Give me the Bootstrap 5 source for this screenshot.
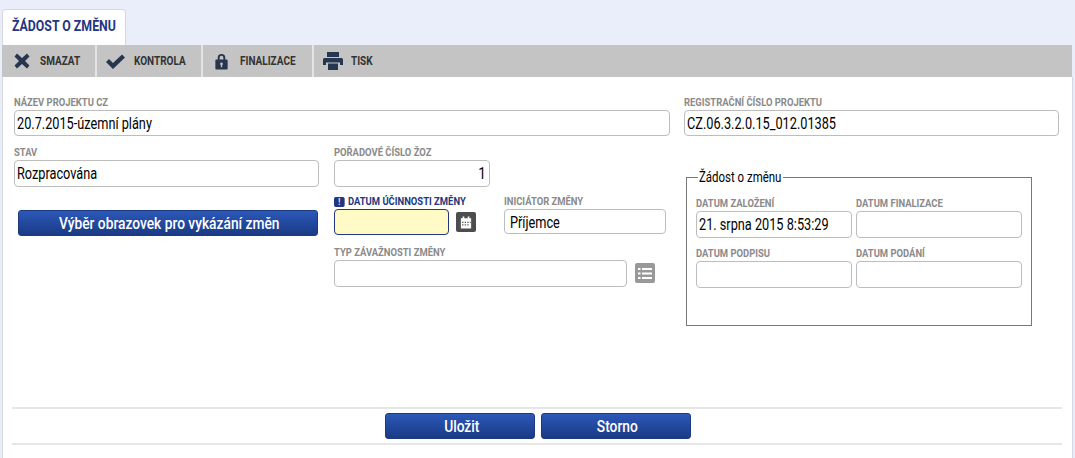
<!DOCTYPE html>
<html lang="cs"><head><meta charset="utf-8"><title>Žádost o změnu</title>
<link href="https://cdn.jsdelivr.net/npm/bootstrap@5.3.0/dist/css/bootstrap.min.css" rel="stylesheet">
<style>
html,body{height:458px;overflow:hidden}
body{background:#eaeefa;font-family:Roboto,"Liberation Sans",sans-serif;padding:9px 3px 0 2px;color:#000}
.tx{display:inline-block;white-space:nowrap;transform-origin:left center}
.tab-head{width:124px;height:36px;background:#fff;border:1px solid #d5d8e0;border-bottom:0;border-radius:4px 4px 0 0;color:#23367f;font-weight:700;font-size:14.5px;line-height:34px;padding-left:9px;white-space:nowrap}
.tab-head .tx{transform:scaleX(.85)}
.tool-bar{height:32px;background:#c4c4c4}
.tool-item{height:32px;display:flex;align-items:center;font-weight:700;font-size:12.5px;color:#333;border-right:2px solid #e4e4e4}
.tool-item:last-child{border:0}
.tool-item .tx{transform:scaleX(.8)}
.tool-ico{flex:none;fill:#27364f}
.sheet{background:#fff;height:381px;padding:19px 0 0 11px;border-left:1px solid #d5d8e0;box-shadow:1px 0 0 #d5d8e0}
.lbl{display:block;font-weight:700;font-size:11.5px;line-height:13px;color:#8a8a8a;margin:0 0 1px;white-space:nowrap}
.lbl .tx{transform:scaleX(.82)}
.fld{display:block;height:27px;border:1px solid #bdbdbd;border-radius:4px;background:#fff;font-size:16px;line-height:25px;padding:0 2px;color:#000;white-space:nowrap;overflow:hidden}
.fld .tx{transform:scaleX(.795)}
.fld-end{text-align:right;padding-right:3px}
.fld-end .tx{transform:scaleX(.85);transform-origin:right center}
.fld-first{height:26px}
.fld-req{background:#fffac6;border-color:#23367f;height:26px;width:115px}
.fld-init{height:25px;line-height:25px;margin-top:1px;padding-left:5px}
.lbl-req{color:#23367f}
.req-mark{display:inline-block;width:13px;height:10px;border-radius:2px;background:#23367f;color:#fff;font-size:9px;line-height:10px;text-align:center;margin-right:4px;vertical-align:0}
.blue-btn{display:block;background:linear-gradient(#2c58b8,#1a3a85);border:1px solid #1c3a80;border-radius:3px;color:#fff;font-weight:500;font-size:17px;text-align:center;height:26px;line-height:24px;padding:0 0 0 3px;width:150px}
.blue-btn .tx{transform:scaleX(.81);transform-origin:center}
.btn-select{width:300px;margin:23px 0 0 4px}
.ico-btn{width:20px;height:20px;border-radius:2px;flex:none;display:flex;align-items:center;justify-content:center;margin-top:3px}
.ico-dark{background:#4d4d4d;margin-left:7px}
.ico-gray{background:#999;margin-left:8px}
.col-left{width:656px}.col-right{width:375px;margin-left:14px}
.w-stav{width:305px}.w-mid{width:335px;margin-left:15px}
.w-poradi{width:156px}
.w-date{width:170px}.w-init{width:162px}
.row-date{margin-top:8px}
.row-typ{margin-top:11px}
.fld-typ{width:293px}
.row-second{margin-top:10px}
.frame{position:relative;width:346px;height:149px;border:1px solid #777;margin:41px 0 0 2px;padding:19px 0 0 9px}
.frame-title{position:absolute;top:-8px;left:11px;background:#fff;padding:0 1px;font-size:14.5px;line-height:15px;color:#000;width:85px}
.frame-title .tx{transform:scaleX(.79)}
.frame-a{width:160px}.frame-b{width:166px}
.frame-a .fld{width:156px}
.frame-row{margin-top:9px}
.foot-bar{border-top:2px solid #e6e6e6;border-bottom:2px solid #e6e6e6;height:38px;width:1050px;margin:81px 0 0 -2px;padding:4px 0 0 2px;gap:6px}
</style></head>
<body>
<div class="tab-head"><span class="tx">ŽÁDOST O ZMĚNU</span></div>
<div class="tool-bar d-flex">
  <div class="tool-item" style="width:95px"><svg class="tool-ico" style="margin:0 0 0 12px" width="16" height="16" viewBox="0 0 16 16"><path d="M3 .5 8 5l5-4.500 2.500 3L11 8l4.500 4.500-2.500 3L8 11l-5 4.500-2.500-3L5 8 .5 3.500z"/></svg><span class="tx" style="margin-left:10px">SMAZAT</span></div>
  <div class="tool-item" style="width:106px"><svg class="tool-ico" style="margin-left:8px" width="21" height="17" viewBox="0 0 21 16"><path d="M1 8.500 4 5.500 8 9.500 17 1l3 3L8 15.500z"/></svg><span class="tx" style="margin-left:8px">KONTROLA</span></div>
  <div class="tool-item" style="width:111px"><svg class="tool-ico" style="margin-left:11px" width="15" height="17" viewBox="0 0 14 18"><path fill-rule="evenodd" d="M3 7V5a4 4 0 0 1 8 0v2h1.500q1 0 1 1v8.500q0 1-1 1h-11q-1 0-1-1V8q0-1 1-1zm2 0h4V5a2 2 0 0 0-4 0zm2 3a1.500 1.500 0 0 0-.700 2.800V15h1.400v-2.200A1.500 1.500 0 0 0 7 10z"/></svg><span class="tx" style="margin-left:11px">FINALIZACE</span></div>
  <div class="tool-item" style="width:80px"><svg class="tool-ico" style="margin-left:9px" width="20" height="18" viewBox="0 0 20 18"><path d="M4 0h12v5H4zM1.500 6h17q1.500 0 1.500 1.500V13h-3v-2.500H3V13H0V7.500Q0 6 1.500 6zM5 11.500h10V18H5z"/></svg><span class="tx" style="margin-left:8px">TISK</span></div>
</div>
<div class="sheet">
  <div class="d-flex">
    <div class="col-left">
      <label class="lbl"><span class="tx">NÁZEV PROJEKTU CZ</span></label>
      <div class="fld fld-first"><span class="tx">20.7.2015-územní plány</span></div>
      <div class="d-flex row-second">
        <div class="w-stav">
          <label class="lbl"><span class="tx">STAV</span></label>
          <div class="fld"><span class="tx">Rozpracována</span></div>
          <button class="blue-btn btn-select" type="button"><span class="tx">Výběr obrazovek pro vykázání změn</span></button>
        </div>
        <div class="w-mid">
          <div class="w-poradi"><label class="lbl"><span class="tx">POŘADOVÉ ČÍSLO ŽOZ</span></label><div class="fld fld-end"><span class="tx">1</span></div></div>
          <div class="d-flex row-date">
            <div class="w-date">
              <label class="lbl lbl-req"><span class="tx"><span class="req-mark">!</span>DATUM ÚČINNOSTI ZMĚNY</span></label>
              <div class="d-flex">
                <div class="fld fld-req"></div>
                <div class="ico-btn ico-dark"><svg width="12" height="13" viewBox="0 0 14 14"><path fill-rule="evenodd" d="M1 2h2V0h2v2h4V0h2v2h2v12H1zm1.500 4v1.500H4V6zm3 0v1.500H7V6zm3 0v1.500H10V6zm-6 3v1.500H4V9zm3 0v1.500H7V9zm3 0v1.500H10V9zm3-3v1.500h1V6z" fill="#fff"/></svg></div>
              </div>
            </div>
            <div class="w-init"><label class="lbl"><span class="tx">INICIÁTOR ZMĚNY</span></label><div class="fld fld-init"><span class="tx">Příjemce</span></div></div>
          </div>
          <div class="row-typ">
            <label class="lbl"><span class="tx">TYP ZÁVAŽNOSTI ZMĚNY</span></label>
            <div class="d-flex">
              <div class="fld fld-typ"></div>
              <div class="ico-btn ico-gray"><svg width="14" height="11" viewBox="0 0 14 11"><path d="M0 0h2.500v2H0zm4 0h10v2H4zM0 4.500h2.500v2H0zm4 0h10v2H4zM0 9h2.500v2H0zm4 0h10v2H4z" fill="#fff"/></svg></div>
            </div>
          </div>
        </div>
      </div>
    </div>
    <div class="col-right">
      <label class="lbl"><span class="tx">REGISTRAČNÍ ČÍSLO PROJEKTU</span></label>
      <div class="fld fld-first"><span class="tx">CZ.06.3.2.0.15_012.01385</span></div>
      <div class="frame">
        <div class="frame-title"><span class="tx">Žádost o změnu</span></div>
        <div class="d-flex">
          <div class="frame-a"><label class="lbl"><span class="tx">DATUM ZALOŽENÍ</span></label><div class="fld"><span class="tx">21. srpna 2015 8:53:29</span></div></div>
          <div class="frame-b"><label class="lbl"><span class="tx">DATUM FINALIZACE</span></label><div class="fld"></div></div>
        </div>
        <div class="d-flex frame-row">
          <div class="frame-a"><label class="lbl"><span class="tx">DATUM PODPISU</span></label><div class="fld"></div></div>
          <div class="frame-b"><label class="lbl"><span class="tx">DATUM PODÁNÍ</span></label><div class="fld"></div></div>
        </div>
      </div>
    </div>
  </div>
  <div class="foot-bar d-flex justify-content-center">
    <button class="blue-btn" type="button"><span class="tx">Uložit</span></button>
    <button class="blue-btn" type="button"><span class="tx">Storno</span></button>
  </div>
</div>
<script src="https://cdn.jsdelivr.net/npm/bootstrap@5.3.0/dist/js/bootstrap.bundle.min.js"></script>
</body></html>
